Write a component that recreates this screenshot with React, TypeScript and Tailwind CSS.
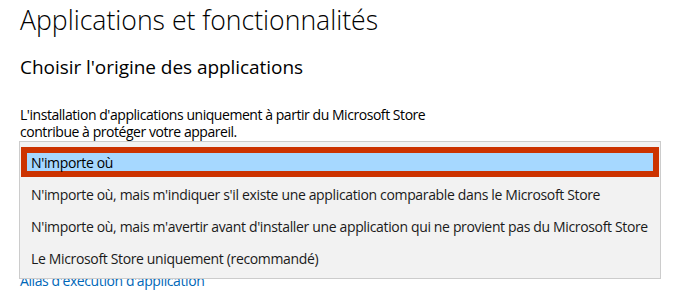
import React from "react";

const items = [
  "N'importe où",
  "N'importe où, mais m'indiquer s'il existe une application comparable dans le Microsoft Store",
  "N'importe où, mais m'avertir avant d'installer une application qui ne provient pas du Microsoft Store",
  "Le Microsoft Store uniquement (recommandé)",
];

export default function App() {
  return (
    <div
      className="w-[680px] h-[306px] bg-white overflow-hidden text-black px-[20px]"
      style={{ fontFamily: '"Open Sans", "Noto Sans", sans-serif' }}
    >
      <h1 className="pt-[2px] text-[26.6px] leading-[36px] font-light whitespace-nowrap">
        Applications et fonctionnalités
      </h1>
      <h2 className="mt-[17px] text-[19px] leading-[24px] font-normal tracking-[-0.05px] whitespace-nowrap">
        Choisir l'origine des applications
      </h2>
      <p className="mt-[27px] text-[14px] leading-[17px] tracking-[-0.45px]">
        L'installation d'applications uniquement à partir du Microsoft Store
        <br />
        contribue à protéger votre appareil.
      </p>
      <div className="relative mt-[1px]">
        <div className="h-[131px]" />
        <a className="block text-[14px] leading-[17px] text-[#0067b8] tracking-[-0.4px]">
          Alias d'exécution d'application
        </a>
        <div className="absolute top-0 left-[-1px] w-[642px] border border-[#cccccc] bg-[#f2f2f2] py-[4px] text-[14px] tracking-[-0.35px] text-[#1a1a1a]">
          <div className="h-[32px] p-[1px]">
            <div className="h-full border-[6px] border-[#cc3300] bg-[#a6d8ff] pl-[4px] flex items-center text-black">
              {items[0]}
            </div>
          </div>
          {items.slice(1).map((t) => (
            <div key={t} className="h-[32px] pl-[11px] flex items-center whitespace-nowrap">
              {t}
            </div>
          ))}
        </div>
      </div>
    </div>
  );
}
